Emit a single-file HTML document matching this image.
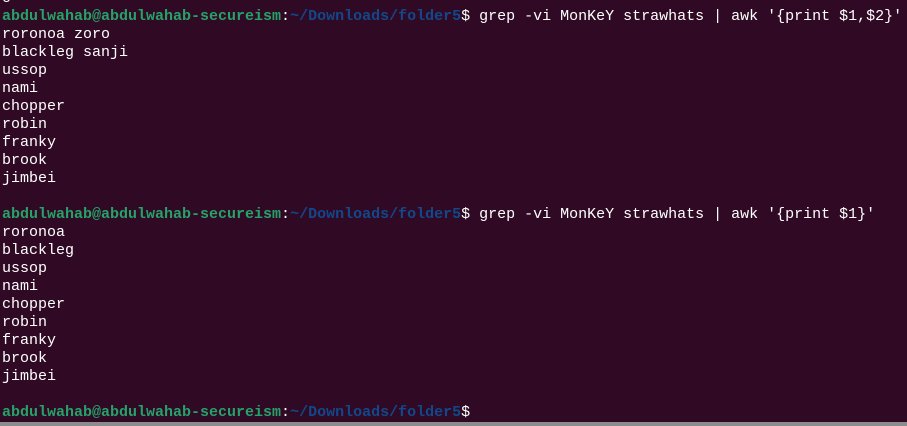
<!DOCTYPE html>
<html><head><meta charset="utf-8"><style>
html,body{margin:0;padding:0;}
body{width:907px;height:426px;background:#300a24;overflow:hidden;position:relative;}
pre{position:absolute;left:2px;top:-10px;margin:0;font-family:"Liberation Mono","DejaVu Sans Mono",monospace;font-size:15px;line-height:18px;color:#ffffff;}
.g{color:#26a269;font-weight:bold;}
.b{color:#12488b;font-weight:bold;}
.bar{position:absolute;left:0;right:0;top:422px;height:4px;background:#8c8c8c;}
</style></head><body>
<pre>o
<span class="g">abdulwahab@abdulwahab-secureism</span>:<span class="b">~/Downloads/folder5</span>$ grep -vi MonKeY strawhats | awk '{print $1,$2}'
roronoa zoro
blackleg sanji
ussop
nami
chopper
robin
franky
brook
jimbei

<span class="g">abdulwahab@abdulwahab-secureism</span>:<span class="b">~/Downloads/folder5</span>$ grep -vi MonKeY strawhats | awk '{print $1}'
roronoa
blackleg
ussop
nami
chopper
robin
franky
brook
jimbei

<span class="g">abdulwahab@abdulwahab-secureism</span>:<span class="b">~/Downloads/folder5</span>$</pre>
<div class="bar"></div>
</body></html>
